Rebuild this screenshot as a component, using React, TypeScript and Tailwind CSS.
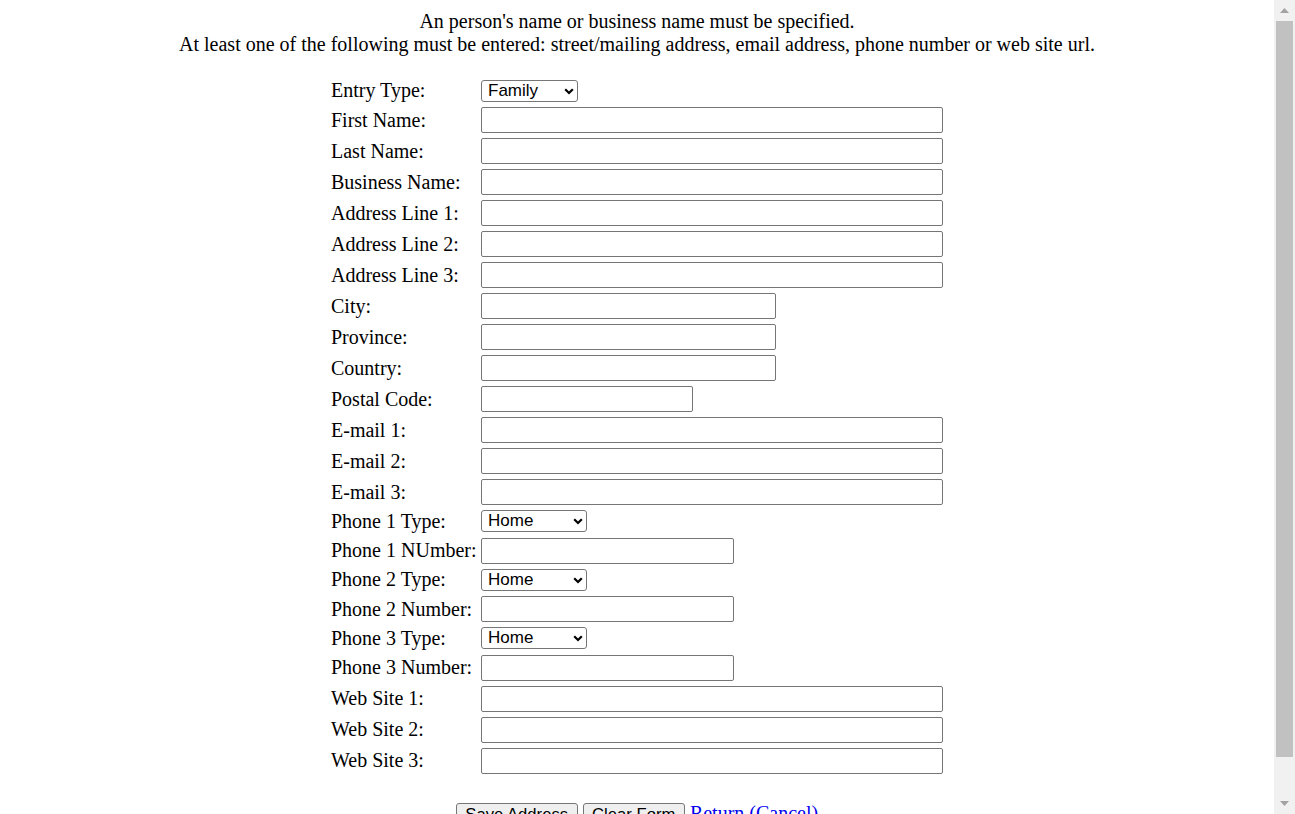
import React from "react";

type Row =
  | { kind: "select"; label: string; value: string; w: string }
  | { kind: "input"; label: string; w: string };

const FULL = "w-[462px]";
const MID = "w-[295px]";
const POST = "w-[212px]";
const PHONE = "w-[253px]";

const rows: Row[] = [
  { kind: "select", label: "Entry Type:", value: "Family", w: "w-[97px]" },
  { kind: "input", label: "First Name:", w: FULL },
  { kind: "input", label: "Last Name:", w: FULL },
  { kind: "input", label: "Business Name:", w: FULL },
  { kind: "input", label: "Address Line 1:", w: FULL },
  { kind: "input", label: "Address Line 2:", w: FULL },
  { kind: "input", label: "Address Line 3:", w: FULL },
  { kind: "input", label: "City:", w: MID },
  { kind: "input", label: "Province:", w: MID },
  { kind: "input", label: "Country:", w: MID },
  { kind: "input", label: "Postal Code:", w: POST },
  { kind: "input", label: "E-mail 1:", w: FULL },
  { kind: "input", label: "E-mail 2:", w: FULL },
  { kind: "input", label: "E-mail 3:", w: FULL },
  { kind: "select", label: "Phone 1 Type:", value: "Home", w: "w-[106px]" },
  { kind: "input", label: "Phone 1 NUmber:", w: PHONE },
  { kind: "select", label: "Phone 2 Type:", value: "Home", w: "w-[106px]" },
  { kind: "input", label: "Phone 2 Number:", w: PHONE },
  { kind: "select", label: "Phone 3 Type:", value: "Home", w: "w-[106px]" },
  { kind: "input", label: "Phone 3 Number:", w: PHONE },
  { kind: "input", label: "Web Site 1:", w: FULL },
  { kind: "input", label: "Web Site 2:", w: FULL },
  { kind: "input", label: "Web Site 3:", w: FULL },
];

function FakeSelect({ value, w }: { value: string; w: string }) {
  const options =
    value === "Family" ? ["Family", "Person", "Business"] : ["Home", "Work", "Cell", "Fax"];
  return (
    <span className={`relative flex h-[22px] ${w}`}>
      <select
        defaultValue={value}
        className="block appearance-none w-full h-[22px] border border-[#767676] rounded-[3px] bg-white pl-[6px] text-[17px] leading-[20px] text-black font-['Liberation_Sans',Arial,sans-serif]"
      >
        {options.map((o) => (
          <option key={o}>{o}</option>
        ))}
      </select>
      <svg
        className="absolute right-[4px] top-[8px] pointer-events-none"
        width="10"
        height="7"
        viewBox="0 0 10 7"
      >
        <path d="M1.2 1.2 L5 5 L8.8 1.2" fill="none" stroke="#000" strokeWidth="2.2" />
      </svg>
    </span>
  );
}

const btn =
  "h-[24px] px-[8.5px] border border-[#767676] rounded-[3px] bg-[#efefef] text-[16.67px] leading-[19px] font-['Liberation_Sans',Arial,sans-serif] text-black";

export default function App() {
  return (
    <div className="flex h-[814px] w-[1295px] overflow-hidden bg-white text-black font-['Liberation_Serif','Times_New_Roman',serif] text-[20px] leading-[23px]">
      <div className="w-[1274px] h-full overflow-hidden pt-[10px]">
        <div className="text-center">
          <div>An person's name or business name must be specified.</div>
          <div>
            At least one of the following must be entered: street/mailing address, email address, phone
            number or web site url.
          </div>
        </div>
        <div className="mx-auto w-[612px] mt-[21px] flex flex-col">
          {rows.map((r) => (
            <div
              key={r.label}
              className={`flex items-center ${r.kind === "select" ? "h-[27.5px]" : "h-[31px]"}`}
            >
              <div className="w-[150px] shrink-0 whitespace-nowrap">{r.label}</div>
              {r.kind === "select" ? (
                <FakeSelect value={r.value} w={r.w} />
              ) : (
                <input
                  type="text"
                  className={`h-[26px] ${r.w} border border-[#767676] rounded-[2px] bg-white px-[2px] text-[16.67px] font-['Liberation_Sans',Arial,sans-serif]`}
                />
              )}
            </div>
          ))}
        </div>
        <div className="mt-[26px] flex justify-center items-baseline">
          <button className={btn}>Save Address</button>
          <span className="w-[5px]" />
          <button className={btn}>Clear Form</button>
          <span className="w-[5px]" />
          <a href="#" className="text-[#0000ee] underline">
            Return (Cancel)
          </a>
        </div>
      </div>
      <div className="w-[21px] h-full bg-[#f1f1f1] flex flex-col">
        <div className="h-[21px] flex items-center justify-center">
          <svg width="9" height="5" viewBox="0 0 9 5">
            <path d="M0 5 L4.5 0 L9 5 Z" fill="#a3a3a3" />
          </svg>
        </div>
        <div className="flex-1 flex flex-col">
          <div className="h-[736px] mx-[2px] bg-[#c1c1c1]" />
        </div>
        <div className="h-[21px] flex items-center justify-center">
          <svg width="9" height="5" viewBox="0 0 9 5">
            <path d="M0 0 L4.5 5 L9 0 Z" fill="#a3a3a3" />
          </svg>
        </div>
      </div>
    </div>
  );
}
